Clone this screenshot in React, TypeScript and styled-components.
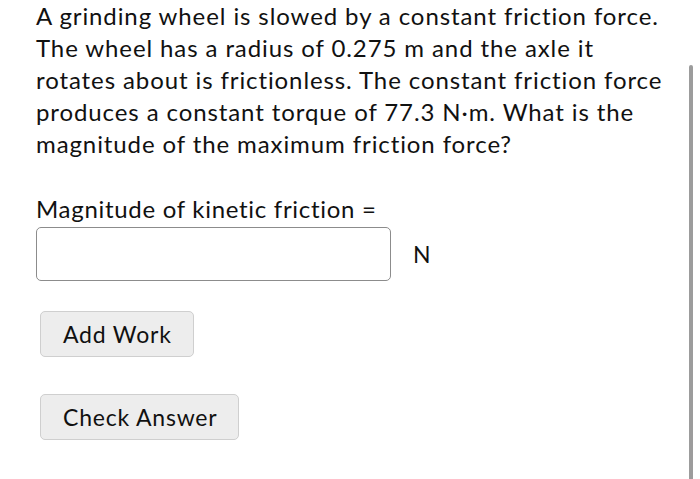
import styled, { createGlobalStyle } from 'styled-components'

const GlobalStyle = createGlobalStyle`
  html, body {
    margin: 0;
    padding: 0;
    background: #fff;
  }
  body {
    font-family: Lato, "Open Sans", sans-serif;
    color: #111;
  }
`

export default function App() {
  return (
    <>
      <GlobalStyle />
      <Page>
        <Question>
          A grinding wheel is slowed by a constant friction force.
          <br />
          The wheel has a radius of 0.275 m and the axle it
          <br />
          rotates about is frictionless. The constant friction force
          <br />
          produces a constant torque of 77.3 N·m. What is the
          <br />
          magnitude of the maximum friction force?
        </Question>
        <Label>Magnitude of kinetic friction =</Label>
        <AnswerRow>
          <AnswerInput type="text" />
          <Unit>N</Unit>
        </AnswerRow>
        <Actions>
          <ActionButton type="button">Add Work</ActionButton>
          <ActionButton type="button">Check Answer</ActionButton>
        </Actions>
        <ScrollThumb />
      </Page>
    </>
  )
}

const Page = styled.div`
  position: relative;
  width: 700px;
  height: 479px;
  overflow: hidden;
  padding: 0 0 0 36px;
  box-sizing: border-box;
`

const Question = styled.p`
  margin: 0;
  font-size: 24px;
  letter-spacing: 0.9px;
  line-height: 32px;
  white-space: nowrap;
`

const Label = styled.div`
  margin-top: 33px;
  font-size: 24px;
  letter-spacing: 0.7px;
  line-height: 32px;
`

const AnswerRow = styled.div`
  display: flex;
  align-items: center;
  gap: 22px;
  margin-top: 2px;
`

const AnswerInput = styled.input`
  width: 355px;
  height: 54px;
  box-sizing: border-box;
  border: 1.5px solid #8c8c8c;
  border-radius: 5px;
  background: #fff;
  outline: none;
  font-size: 22px;
  padding: 0 10px;
`

const Unit = styled.span`
  font-size: 23px;
`

const Actions = styled.div`
  display: flex;
  flex-direction: column;
  align-items: flex-start;
  gap: 37px;
  margin-top: 30px;
  padding-left: 4px;
`

const ActionButton = styled.button`
  height: 46px;
  padding: 0 21px 0 22px;
  background: #ededed;
  border: 1px solid #cfcfcf;
  border-radius: 5px;
  font-family: Lato, "Open Sans", sans-serif;
  font-size: 23px;
  letter-spacing: 0.8px;
  color: #111;
`

const ScrollThumb = styled.div`
  position: absolute;
  left: 689px;
  top: 65px;
  width: 4px;
  height: 430px;
  border-radius: 2px;
  background: #9c9c9c;
`
